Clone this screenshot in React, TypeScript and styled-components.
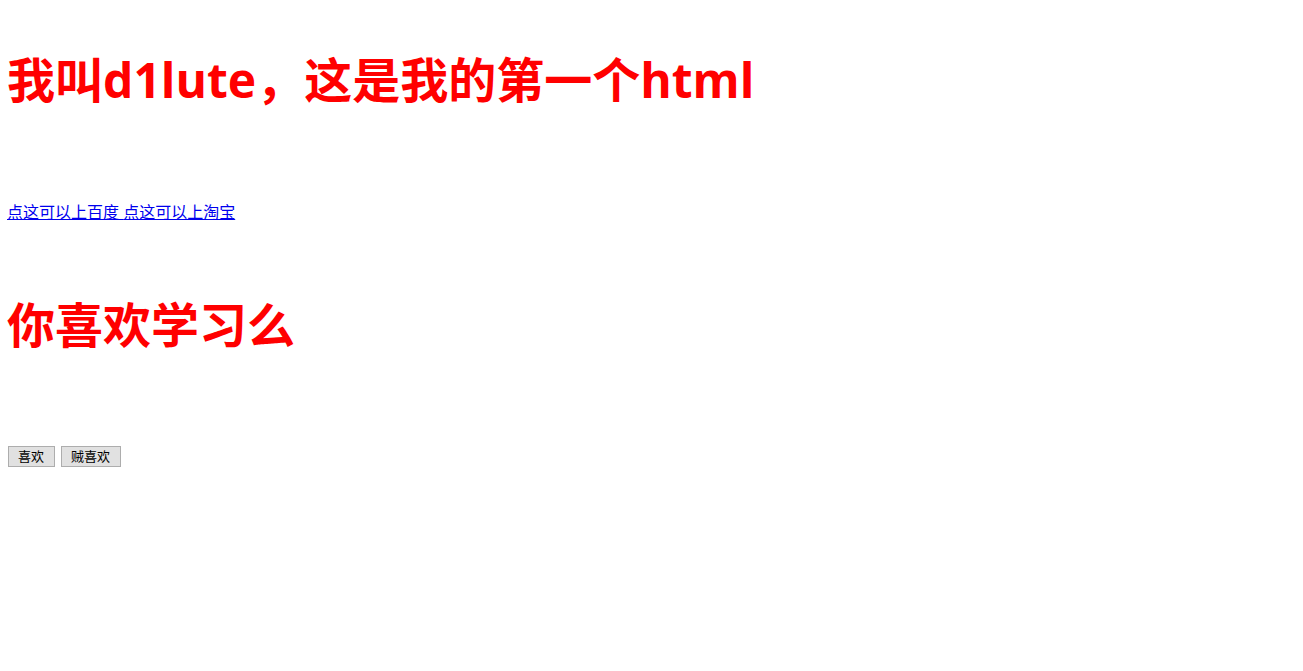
import React from "react";
import styled, { createGlobalStyle } from "styled-components";

const GlobalStyle = createGlobalStyle`
  body {
    margin: 0;
    background: #ffffff;
    font-family: "Open Sans", "Noto Sans CJK SC", sans-serif;
    font-size: 16px;
    line-height: 22px;
  }
`;

const Page = styled.main`
  display: flex;
  flex-direction: column;
  align-items: flex-start;
  gap: 70px;
  padding: 48px 7px;
`;

const Title = styled.h1`
  margin: 0;
  color: #ff0000;
  font-size: 48px;
  font-weight: 700;
  line-height: 64px;
`;

const Section = styled.section`
  display: flex;
  flex-direction: column;
  gap: 89px;
`;

const Links = styled.nav`
  white-space: pre;
`;

const Link = styled.a`
  color: #0000ee;
  text-decoration: underline;
`;

const Actions = styled.div`
  display: flex;
  gap: 6px;
  padding-left: 1px;
`;

const Button = styled.button`
  height: 21px;
  padding: 0 10px 0 9px;
  border: 1px solid #adadad;
  border-radius: 0;
  background: #e1e1e1;
  color: #000000;
  font-family: inherit;
  font-size: 13px;
  line-height: 19px;
`;

export default function App() {
  return (
    <>
      <GlobalStyle />
      <Page>
        <Section>
          <Title lang="zh-CN">我叫d1lute，这是我的第一个html</Title>
          <Links lang="zh-CN">
            <Link href="#baidu">点这可以上百度 </Link>
            <Link href="#taobao">点这可以上淘宝</Link>
          </Links>
        </Section>
        <Section>
          <Title lang="zh-CN">你喜欢学习么</Title>
          <Actions lang="zh-CN">
            <Button type="button">喜欢</Button>
            <Button type="button">贼喜欢</Button>
          </Actions>
        </Section>
      </Page>
    </>
  );
}
